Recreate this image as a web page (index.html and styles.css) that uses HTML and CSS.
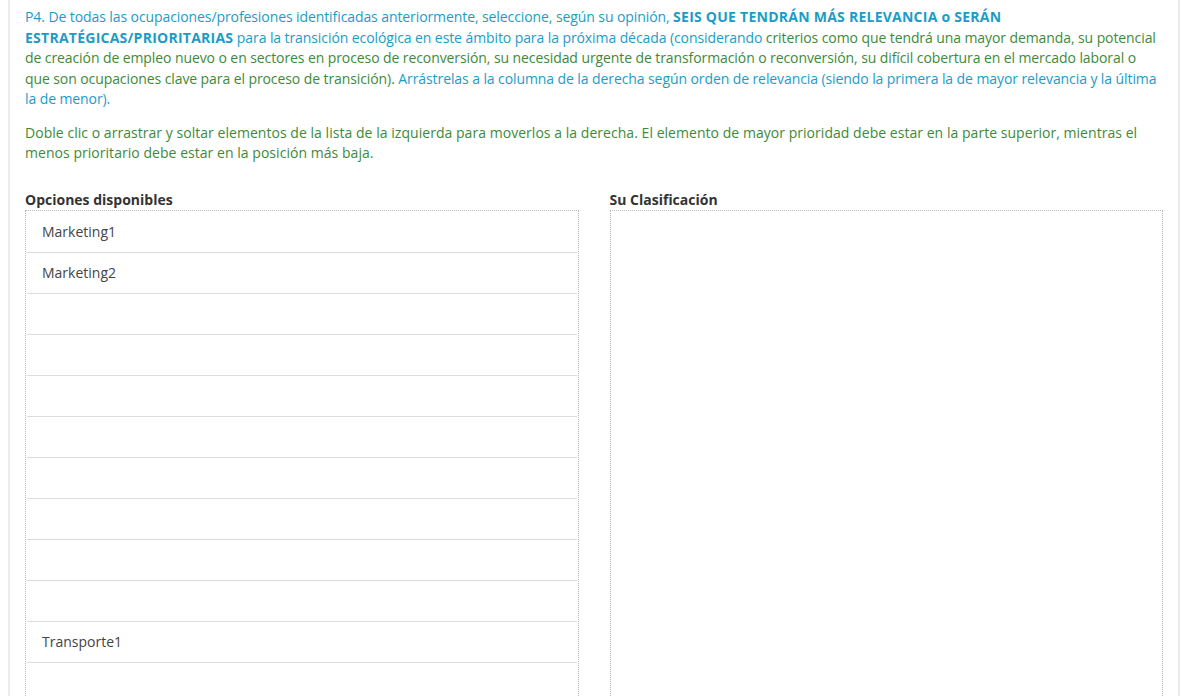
FILE: index.html
```html
<!DOCTYPE html>
<html lang="es">
<head>
<meta charset="utf-8">
<title>P4 Clasificación</title>
<link rel="stylesheet" href="styles.css">
</head>
<body>
<div class="question">
  <p class="question-text"><span class="accent">P4. De todas las ocupaciones/profesiones identificadas anteriormente, seleccione, según su opinión, <strong>SEIS QUE TENDRÁN MÁS RELEVANCIA o SERÁN ESTRATÉGICAS/PRIORITARIAS</strong> para la transición ecológica en este ámbito para la próxima década (considerando</span> criterios como que tendrá una mayor demanda, su potencial de creación de empleo nuevo o en sectores en proceso de reconversión, su necesidad urgente de transformación o reconversión, su difícil cobertura en el mercado laboral o que son ocupaciones clave para el proceso de transición). <span class="accent">Arrástrelas a la columna de la derecha según orden de relevancia (siendo la primera la de mayor relevancia y la última la de menor).</span></p>
  <p class="help-text">Doble clic o arrastrar y soltar elementos de la lista de la izquierda para moverlos a la derecha. El elemento de mayor prioridad debe estar en la parte superior, mientras el menos prioritario debe estar en la posición más baja.</p>

  <div class="ranking">
    <div class="ranking-col">
      <h3 class="ranking-title">Opciones disponibles</h3>
      <ul class="ranking-list">
        <li class="ranking-item">Marketing1</li>
        <li class="ranking-item">Marketing2</li>
        <li class="ranking-item"></li>
        <li class="ranking-item"></li>
        <li class="ranking-item"></li>
        <li class="ranking-item"></li>
        <li class="ranking-item"></li>
        <li class="ranking-item"></li>
        <li class="ranking-item"></li>
        <li class="ranking-item"></li>
        <li class="ranking-item">Transporte1</li>
        <li class="ranking-item"></li>
      </ul>
    </div>
    <div class="ranking-col">
      <h3 class="ranking-title">Su Clasificación</h3>
      <ul class="ranking-list ranking-target"></ul>
    </div>
  </div>
</div>
</body>
</html>
```

FILE: styles.css
```css
html, body {
  margin: 0;
  padding: 0;
  background: #ffffff;
}

body {
  padding: 0 15px 0 8px;
  font-family: "Open Sans", "Noto Sans", sans-serif;
  font-size: 14px;
  line-height: 20.5px;
  color: #3d8a3a;
}

.question {
  border-left: 2px solid #ececec;
  border-right: 2px solid #ececec;
  padding: 7px 15px 40px 15px;
  min-height: 700px;
}

.question-text {
  margin: 0 0 13px 0;
  color: #3d8a3a;
  letter-spacing: -0.09px;
}

.accent {
  color: #1b9cc7;
}

.accent strong {
  font-weight: 700;
  letter-spacing: 0.25px;
}

.help-text {
  margin: 0 0 26px 0;
  color: #3d8a3a;
  letter-spacing: 0.04px;
}

.ranking {
  display: grid;
  grid-template-columns: 1fr 1fr;
  column-gap: 31px;
}

.ranking-col {
  min-width: 0;
}

.ranking-title {
  margin: 0;
  font-size: 14px;
  line-height: 20px;
  font-weight: 700;
  color: #333333;
}

.ranking-list {
  list-style: none;
  margin: 0;
  padding: 1px;
  border: 1px dotted #b9b9b9;
  min-height: 520px;
}

.ranking-item {
  height: 40px;
  line-height: 40px;
  padding: 0 15px;
  border-bottom: 1px solid #dddddd;
  color: #444444;
}
```
